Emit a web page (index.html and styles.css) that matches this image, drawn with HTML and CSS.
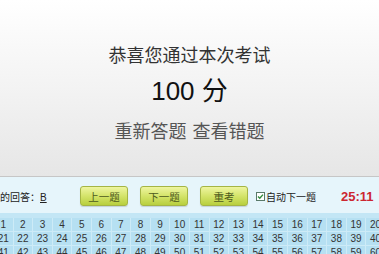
FILE: index.html
```html
<!DOCTYPE html>
<html lang="zh">
<head>
<meta charset="utf-8">
<link rel="stylesheet" href="styles.css">
</head>
<body>
<div class="result">
  <div class="congrats">恭喜您通过本次考试</div>
  <div class="score">100 分</div>
  <div class="actions">重新答题 查看错题</div>
</div>
<div class="toolbar">
  <div class="answer">您的回答：<span class="ans">B</span></div>
  <button class="btn">上一题</button>
  <button class="btn">下一题</button>
  <button class="btn">重考</button>
  <label class="auto"><svg class="cb" width="9" height="9" viewBox="0 0 9 9"><rect x="0.5" y="0.5" width="8" height="8" fill="#fff" stroke="#5a7a6a"/><path d="M2 4.5 L3.8 6.3 L7 2.6" fill="none" stroke="#2f8a3a" stroke-width="1.4"/></svg>自动下一题</label>
  <div class="timer">25:11</div>
</div>
<div class="grid">
  <span>1</span><span>2</span><span>3</span><span>4</span><span>5</span><span>6</span><span>7</span><span>8</span><span>9</span><span>10</span>
  <span>11</span><span>12</span><span>13</span><span>14</span><span>15</span><span>16</span><span>17</span><span>18</span><span>19</span><span>20</span>
  <span>21</span><span>22</span><span>23</span><span>24</span><span>25</span><span>26</span><span>27</span><span>28</span><span>29</span><span>30</span>
  <span>31</span><span>32</span><span>33</span><span>34</span><span>35</span><span>36</span><span>37</span><span>38</span><span>39</span><span>40</span>
  <span>41</span><span>42</span><span>43</span><span>44</span><span>45</span><span>46</span><span>47</span><span>48</span><span>49</span><span>50</span>
  <span>51</span><span>52</span><span>53</span><span>54</span><span>55</span><span>56</span><span>57</span><span>58</span><span>59</span><span>60</span>
</div>
</body>
</html>
```
FILE: styles.css
```css
html, body {
  margin: 0;
  padding: 0;
  overflow: hidden;
  background: #bfe4f4;
}
body {
  font-family: "Liberation Sans", "Noto Sans CJK SC", sans-serif;
  width: 379px;
  height: 254px;
}
.result {
  height: 177px;
  box-sizing: border-box;
  padding-top: 42px;
  background: linear-gradient(#ffffff, #f3f3f3 50%, #e6e6e6);
  border-bottom: 1px solid #c6c6c6;
  display: flex;
  flex-direction: column;
  align-items: center;
  font-family: "Noto Sans CJK SC", sans-serif;
}
.congrats {
  font-size: 18px;
  line-height: 24px;
  color: #333;
}
.score {
  margin-top: 9px;
  font-family: "Liberation Sans", "Noto Sans CJK SC", sans-serif;
  font-size: 26px;
  line-height: 32px;
  color: #111;
}
.actions {
  margin-top: 11px;
  font-size: 18px;
  line-height: 24px;
  color: #555;
  word-spacing: 2px;
}
.toolbar {
  height: 36px;
  margin-left: -10px;
  background: #e6f5fb;
  display: flex;
  align-items: center;
  padding-top: 2px;
  box-sizing: border-box;
  font-family: "Noto Sans CJK SC", sans-serif;
  font-size: 10px;
  color: #222;
}
.answer {
  width: 90px;
  white-space: nowrap;
}
.ans {
  text-decoration: underline;
  font-family: "Liberation Sans", sans-serif;
}
.btn {
  width: 48px;
  height: 20px;
  margin-right: 12px;
  padding: 0;
  border: 1px solid #a5b545;
  border-radius: 3px;
  background: linear-gradient(#eef5a0, #d4e46a 50%, #b8cf3e);
  box-shadow: 0 1px 1px rgba(0,0,0,0.15);
  font-family: "Noto Sans CJK SC", sans-serif;
  font-size: 10.5px;
  color: #4d5a1c;
}
.auto {
  display: flex;
  align-items: center;
  margin-left: -4px;
  gap: 1px;
  white-space: nowrap;
}
.cb {
  display: block;
}
.timer {
  margin-left: 25px;
  font-family: "Liberation Sans", sans-serif;
  font-weight: bold;
  font-size: 13px;
  color: #cc2630;
}
.grid {
  margin-left: -6px;
  padding-top: 5px;
  display: grid;
  grid-template-columns: repeat(20, 19.6px);
  grid-auto-rows: 14px;
  background: #c3e6f5;
}
.grid span {
  display: flex;
  align-items: center;
  justify-content: center;
  font-size: 10px;
  color: #333;
  background: #b6e0f2;
  border-right: 1px solid #cdebf7;
  border-bottom: 1px solid #cdebf7;
  box-sizing: border-box;
}
```
